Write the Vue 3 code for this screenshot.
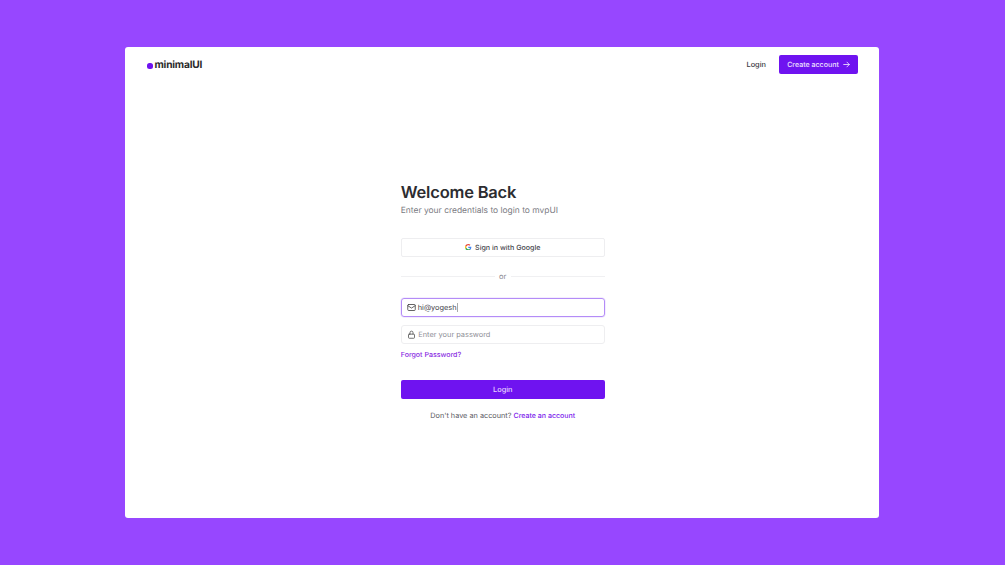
<template>
  <div class="page">
    <div class="card">
      <header class="top">
        <div class="logo"><span class="dot"></span>minimalUI</div>
        <nav class="nav">
          <a class="nav-login">Login</a>
          <button class="btn-primary small">
            Create account
            <svg width="7" height="7" viewBox="0 0 10 10" fill="none" stroke="#f0e6ff" stroke-width="1.200" stroke-linecap="round" stroke-linejoin="round"><path d="M1 5h8M5.600 1.600 9 5 5.600 8.400"/></svg>
          </button>
        </nav>
      </header>
      <main class="main">
        <form class="form" @submit.prevent>
          <h1>Welcome Back</h1>
          <p class="sub">Enter your credentials to login to mvpUI</p>
          <button class="btn-google" type="button">
            <svg width="6.500" height="6.500" viewBox="0 0 48 48">
              <path fill="#EA4335" d="M24 9.500c3.540 0 6.710 1.220 9.210 3.600l6.850-6.850C35.900 2.380 30.470 0 24 0 14.620 0 6.510 5.380 2.560 13.220l7.980 6.190C12.430 13.720 17.740 9.500 24 9.500z"/>
              <path fill="#4285F4" d="M46.980 24.550c0-1.570-.15-3.090-.38-4.550H24v9.020h12.940c-.58 2.960-2.260 5.480-4.780 7.180l7.730 6c4.510-4.180 7.090-10.360 7.090-17.650z"/>
              <path fill="#FBBC05" d="M10.530 28.590c-.48-1.450-.76-2.990-.76-4.590s.27-3.140.76-4.590l-7.980-6.190C.92 16.460 0 20.120 0 24c0 3.880.92 7.540 2.560 10.780l7.970-6.190z"/>
              <path fill="#34A853" d="M24 48c6.480 0 11.930-2.130 15.890-5.810l-7.730-6c-2.150 1.450-4.920 2.300-8.160 2.300-6.260 0-11.570-4.220-13.470-9.910l-7.980 6.190C6.510 42.620 14.620 48 24 48z"/>
            </svg>
            Sign in with Google
          </button>
          <div class="divider"><span>or</span></div>
          <div class="field focused">
            <svg width="9" height="9" viewBox="0 0 24 24" fill="none" stroke="#444" stroke-width="2.200" stroke-linecap="round" stroke-linejoin="round"><rect x="2" y="4" width="20" height="16" rx="2.500"/><path d="m22 7-10 6.500L2 7"/></svg>
            <span class="value">hi@yogesh</span><span class="caret"></span>
          </div>
          <div class="field second">
            <svg width="9" height="9" viewBox="0 0 24 24" fill="none" stroke="#555" stroke-width="2.200" stroke-linecap="round" stroke-linejoin="round"><rect x="4" y="11" width="16" height="11" rx="2"/><path d="M8 11V7a4 4 0 0 1 8 0v4"/></svg>
            <span class="placeholder">Enter your password</span>
          </div>
          <a class="forgot">Forgot Password?</a>
          <button class="btn-primary wide">Login</button>
          <p class="signup">Don't have an account? <a>Create an account</a></p>
        </form>
      </main>
    </div>
  </div>
</template>

<script setup>
</script>

<style>
html, body { margin: 0; background: #9747ff; }
</style>

<style scoped>
.page { width: 1005px; height: 565px; box-sizing: border-box; padding: 47px 125px; background: #9747ff; font-family: Inter, "Liberation Sans", sans-serif; color: #27272a; overflow: hidden; text-rendering: geometricPrecision; }
.card { height: 471px; width: 754px; background: #fff; border-radius: 3px; display: flex; flex-direction: column; }
.top { display: flex; justify-content: space-between; align-items: center; padding: 8px 21px 0 21.500px; height: 19px; }
.logo { display: flex; align-items: center; font-size: 10.200px; font-weight: 700; letter-spacing: -0.2px; color: #2a2a2a; margin-top: 1.500px; }
.dot { width: 6px; height: 6px; border-radius: 2.500px; background: #6f13f0; margin-right: 2px; margin-top: .5px; }
.nav { display: flex; align-items: center; gap: 13px; }
.nav-login { font-size: 7.400px; font-weight: 500; color: #3a3a3f; padding-top: .5px; }
.btn-primary { background: #6f13f0; color: #efe4ff; border: none; border-radius: 2px; font-family: inherit; font-size: 7.050px; font-weight: 500; padding: .5px 0 0; display: flex; align-items: center; justify-content: center; text-rendering: geometricPrecision; }
.small { width: 79px; height: 19px; gap: 4px; }
.main { flex: 1; display: flex; justify-content: center; padding: 106.500px 0 0 1.500px; }
.form { width: 204px; display: flex; flex-direction: column; }
h1 { margin: 0; font-size: 16.500px; line-height: 22px; font-weight: 600; letter-spacing: -0.2px; color: #2c2c30; }
.sub { margin: 3.500px 0 0; font-size: 8.450px; line-height: 11px; color: #7a7a82; }
.btn-google { margin-top: 20.500px; height: 19px; box-sizing: border-box; background: #fff; border: 1px solid #eeeef0; border-radius: 2px; font-family: inherit; font-size: 7.100px; font-weight: 500; color: #45454c; display: flex; align-items: center; justify-content: center; gap: 3.500px; padding: 0; text-rendering: geometricPrecision; }
.divider { display: flex; align-items: center; gap: 4.500px; height: 10px; margin-top: 15px; font-size: 7.500px; color: #8a8a92; }
.divider::before, .divider::after { content: ''; flex: 1; height: 1px; background: #f0f0f2; }
.field { box-sizing: border-box; margin-top: 16.500px; height: 19px; border: 1px solid #eeeef0; border-radius: 3px; display: flex; align-items: center; padding: 0 5px 0 5.500px; font-size: 7.400px; gap: 2px; }
.field.focused { border: 1.500px solid #b48cf7; box-shadow: 0 0 0 .5px #e9dcff; padding-left: 5px; }
.field.second { margin-top: 8px; }
.value { color: #45454c; }
.caret { width: 1px; height: 9px; background: #aaa; margin-left: -1.500px; }
.placeholder { color: #8f8f97; }
.forgot { margin-top: 6px; font-size: 7.050px; line-height: 10px; font-weight: 500; color: #8a2be2; }
.wide { margin-top: 19.500px; height: 19px; width: 204px; font-size: 7.400px; color: #e6d4ff; flex: none; }
.signup { margin: 12px 0 0; text-align: center; font-size: 7.300px; line-height: 10px; color: #5a5a62; }
.signup a { color: #7b22ec; font-size: 7.050px; font-weight: 500; }
</style>
